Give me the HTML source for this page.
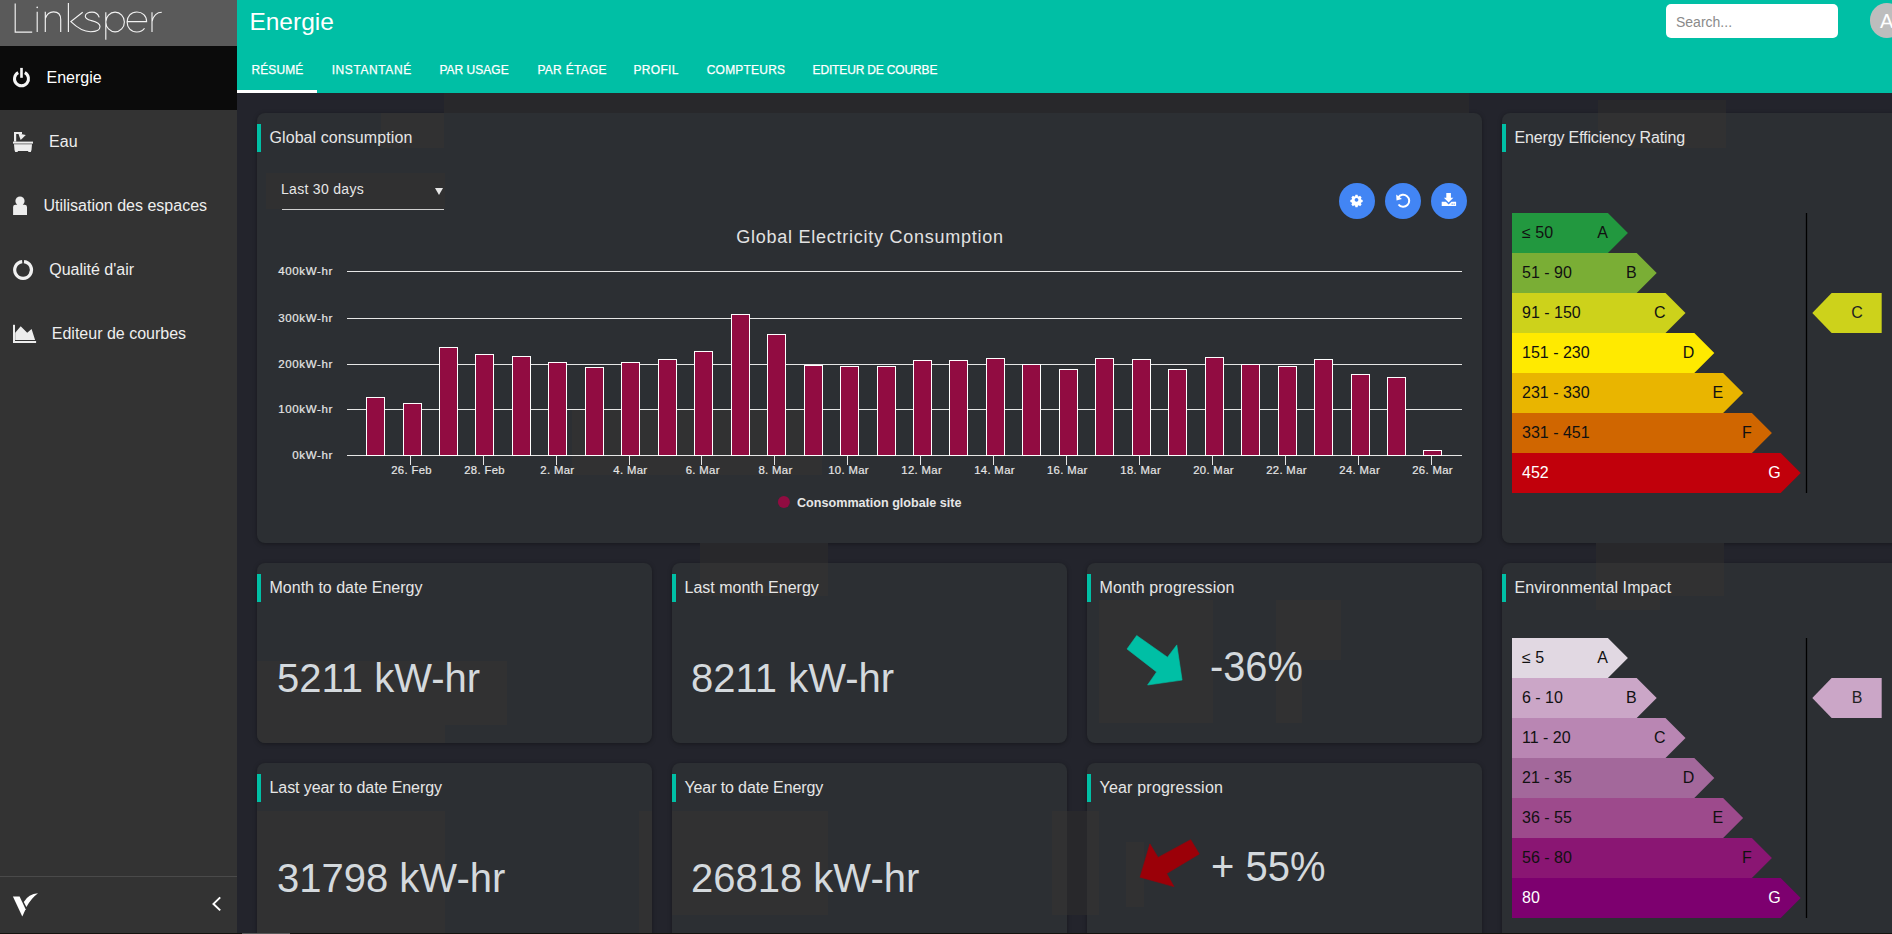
<!DOCTYPE html>
<html><head><meta charset="utf-8"><title>Energie</title>
<style>
html,body{margin:0;padding:0;}
body{width:1892px;height:934px;overflow:hidden;position:relative;background:#23242c;font-family:"Liberation Sans", sans-serif;}
.tab{position:absolute;top:63.54px;font-size:12px;line-height:12px;color:#fff;white-space:nowrap;-webkit-text-stroke:0.25px #fff;}
</style></head><body>
<div style="position:absolute;left:0;top:0;width:237px;height:934px;background:#333333"></div>
<div style="position:absolute;left:0;top:0;width:237px;height:46px;background:#5a5a5a"></div>
<div style="position:absolute;left:0;top:46px;width:237px;height:64px;background:#0b0b0b"></div>
<svg style="position:absolute;left:0;top:0" width="237" height="46" viewBox="0 0 237 46">
<g fill="none" stroke="#f2f2f2" stroke-width="1.15" stroke-linecap="butt">
<path d="M15.2,3.4 V32.1 H32.2"/>
<path d="M37.2,11.8 V32.1"/>
<path d="M45.3,11.8 V32.1 M45.3,18.5 C47,13.5 51,11.8 53.5,11.8 C58,11.8 60.7,14.5 60.7,19.5 V32.1"/>
<path d="M68.4,3 V32.1 M82.7,12.3 L70.9,21.6 C77,27.5 83,31.7 90.5,31.7 C96.5,31.7 100,29.5 100,26.5 C100,22.6 95,21.5 91,20.5 C87,19.5 85.3,18.3 85.3,16.3 C85.3,13.7 88.5,12.1 92,12.1 C95.5,12.1 98.2,13.8 99.2,17.3"/>
<path d="M105.8,12.3 V39.7 M105.8,22 A9.3,9.8 0 1 0 124.4,22 A9.3,9.8 0 1 0 105.8,22"/>
<path d="M127.1,21.6 H146.6 C146.6,15.8 142.5,12 136.8,12 C131,12 127.1,16.3 127.1,22 C127.1,27.7 131,32 136.8,32 C140.5,32 143.2,30.3 144.5,28.3"/>
<path d="M152,12.3 V32.1 M152,21.5 C153.5,15.5 157,12.3 161.8,12.3"/>
</g>
<circle cx="37.2" cy="7.4" r="0.8" fill="#f2f2f2"/>
</svg>
<svg style="position:absolute;left:0;top:46px" width="60" height="310" viewBox="0 46 60 310">
<g fill="none" stroke="#f5f5f5" stroke-width="3">
<path d="M18.21,72.62 A7,7 0 1 0 24.79,72.62"/>
</g>
<rect x="20.2" y="67.9" width="2.6" height="9.9" fill="#f5f5f5"/>
<g fill="#ededed">
<rect x="13" y="141.6" width="20" height="2"/>
<path d="M14,144.2 H32 L31.5,150 L30.8,152 H28.5 L28,151 H18 L17.5,152 H15.2 L14.5,150 Z"/>
<rect x="14" y="132" width="2.2" height="9.6"/>
<rect x="14" y="132" width="8" height="2"/>
<path d="M18.3,133.6 L25.8,135 L20.7,140 Z"/>
<circle cx="20" cy="201" r="4.6"/>
<path d="M13.1,207 Q13.1,204.7 15.5,204.7 H24.6 Q27,204.7 27,207 V215 H13.1 Z"/>
<path d="M15.2,332.7 L20.7,326.2 L27.2,332.7 L31.6,329 L35.1,339.9 H15.2 Z"/>
<rect x="13" y="324.8" width="2" height="18.2"/>
<rect x="13" y="341" width="23.1" height="2"/>
</g>
<path d="M22.2,261.55 A8.4,8.4 0 1 0 24.0,261.55" fill="none" stroke="#f0f0f0" stroke-width="3.2"/>
</svg>
<div style="position:absolute;left:46.5px;top:70.46px;font-size:16px;line-height:16px;color:#ffffff;font-weight:400;white-space:nowrap;">Energie</div>
<div style="position:absolute;left:49.099999999999994px;top:134.46px;font-size:16px;line-height:16px;color:#eeeeee;font-weight:400;white-space:nowrap;">Eau</div>
<div style="position:absolute;left:43.4px;top:198.46px;font-size:16px;line-height:16px;color:#eeeeee;font-weight:400;white-space:nowrap;">Utilisation des espaces</div>
<div style="position:absolute;left:49.199999999999996px;top:262.46px;font-size:16px;line-height:16px;color:#eeeeee;font-weight:400;white-space:nowrap;">Qualité d&#39;air</div>
<div style="position:absolute;left:51.800000000000004px;top:326.46px;font-size:16px;line-height:16px;color:#eeeeee;font-weight:400;white-space:nowrap;">Editeur de courbes</div>
<div style="position:absolute;left:0;top:876px;width:237px;height:1px;background:#4a4a4a"></div>
<svg style="position:absolute;left:0;top:880px" width="237" height="54" viewBox="0 880 237 54">
<path d="M12.9,896.6 L19.6,896.6 L25.6,909.3 L22.3,916.5 Z" fill="#fff"/>
<path d="M23.8,902 Q28.5,893.6 38,893.2 Q31.5,898 26.4,906.9 Z" fill="#fff"/>
<path d="M220.2,897.4 L213.5,903.9 L220.2,910.4" fill="none" stroke="#fff" stroke-width="2"/>
</svg>
<div style="position:absolute;left:237px;top:0;width:1655px;height:93px;background:#00bfa5"></div>
<div style="position:absolute;left:249.4px;top:10.06px;font-size:24.5px;line-height:24.5px;color:#ffffff;font-weight:400;white-space:nowrap;">Energie</div>
<div class="tab" style="left:251.5px;letter-spacing:0.1px">RÉSUMÉ</div>
<div class="tab" style="left:331.70000000000005px;letter-spacing:0.59px">INSTANTANÉ</div>
<div class="tab" style="left:439.5px;letter-spacing:0.0px">PAR USAGE</div>
<div class="tab" style="left:537.4px;letter-spacing:0.29px">PAR ÉTAGE</div>
<div class="tab" style="left:633.5px;letter-spacing:0.32px">PROFIL</div>
<div class="tab" style="left:706.7px;letter-spacing:0.22px">COMPTEURS</div>
<div class="tab" style="left:812.6px;letter-spacing:-0.16px">EDITEUR DE COURBE</div>
<div style="position:absolute;left:237px;top:90px;width:80px;height:3px;background:#fff"></div>
<div style="position:absolute;left:1666px;top:4px;width:172px;height:34px;background:#fff;border-radius:5px"></div>
<div style="position:absolute;left:1676px;top:15.15px;font-size:14px;line-height:14px;color:#8a8a8a;font-weight:400;white-space:nowrap;">Search...</div>
<div style="position:absolute;left:1870px;top:3.3px;width:34.4px;height:34.4px;border-radius:50%;background:#bdbdbd"></div>
<div style="position:absolute;left:1880px;top:10.87px;font-size:20px;line-height:20px;color:#ffffff;font-weight:400;white-space:nowrap;">A</div>
<div style="position:absolute;left:257px;top:113px;width:1225px;height:430px;background:#2c2f33;border-radius:8px;box-shadow:0 1px 4px rgba(0,0,0,0.35)"></div>
<div style="position:absolute;left:257px;top:124px;width:4px;height:28px;background:#00bfa5"></div>
<div style="position:absolute;left:1502px;top:113px;width:420px;height:430px;background:#2c2f33;border-radius:8px;box-shadow:0 1px 4px rgba(0,0,0,0.35)"></div>
<div style="position:absolute;left:1502px;top:124px;width:4px;height:28px;background:#00bfa5"></div>
<div style="position:absolute;left:257px;top:563px;width:395px;height:180px;background:#2c2f33;border-radius:8px;box-shadow:0 1px 4px rgba(0,0,0,0.35)"></div>
<div style="position:absolute;left:257px;top:574px;width:4px;height:28px;background:#00bfa5"></div>
<div style="position:absolute;left:672px;top:563px;width:395px;height:180px;background:#2c2f33;border-radius:8px;box-shadow:0 1px 4px rgba(0,0,0,0.35)"></div>
<div style="position:absolute;left:672px;top:574px;width:4px;height:28px;background:#00bfa5"></div>
<div style="position:absolute;left:1087px;top:563px;width:395px;height:180px;background:#2c2f33;border-radius:8px;box-shadow:0 1px 4px rgba(0,0,0,0.35)"></div>
<div style="position:absolute;left:1087px;top:574px;width:4px;height:28px;background:#00bfa5"></div>
<div style="position:absolute;left:1502px;top:563px;width:420px;height:400px;background:#2c2f33;border-radius:8px;box-shadow:0 1px 4px rgba(0,0,0,0.35)"></div>
<div style="position:absolute;left:1502px;top:574px;width:4px;height:28px;background:#00bfa5"></div>
<div style="position:absolute;left:257px;top:763px;width:395px;height:200px;background:#2c2f33;border-radius:8px;box-shadow:0 1px 4px rgba(0,0,0,0.35)"></div>
<div style="position:absolute;left:257px;top:774px;width:4px;height:28px;background:#00bfa5"></div>
<div style="position:absolute;left:672px;top:763px;width:395px;height:200px;background:#2c2f33;border-radius:8px;box-shadow:0 1px 4px rgba(0,0,0,0.35)"></div>
<div style="position:absolute;left:672px;top:774px;width:4px;height:28px;background:#00bfa5"></div>
<div style="position:absolute;left:1087px;top:763px;width:395px;height:200px;background:#2c2f33;border-radius:8px;box-shadow:0 1px 4px rgba(0,0,0,0.35)"></div>
<div style="position:absolute;left:1087px;top:774px;width:4px;height:28px;background:#00bfa5"></div>
<div style="position:absolute;left:444px;top:93px;width:1025px;height:20px;background:#28282b;"></div>
<div style="position:absolute;left:381px;top:113px;width:63px;height:35px;background:#313132;"></div>
<div style="position:absolute;left:1598px;top:100px;width:128px;height:13px;background:#28282b;"></div>
<div style="position:absolute;left:1598px;top:113px;width:128px;height:35px;background:#313132;"></div>
<div style="position:absolute;left:257px;top:661px;width:250px;height:64px;background:#313132;"></div>
<div style="position:absolute;left:257px;top:725px;width:188px;height:18px;background:#313132;border-bottom-left-radius:8px"></div>
<div style="position:absolute;left:1099px;top:600px;width:114px;height:123px;background:#313132;"></div>
<div style="position:absolute;left:1276px;top:600px;width:65px;height:60px;background:#313132;"></div>
<div style="position:absolute;left:1276px;top:660px;width:26px;height:63px;background:#313132;"></div>
<div style="position:absolute;left:700px;top:543px;width:128px;height:20px;background:#28282b;"></div>
<div style="position:absolute;left:700px;top:563px;width:128px;height:33px;background:#313132;"></div>
<div style="position:absolute;left:672px;top:811px;width:156px;height:104px;background:#313132;"></div>
<div style="position:absolute;left:1052px;top:811px;width:15px;height:104px;background:#313132;"></div>
<div style="position:absolute;left:1067px;top:811px;width:20px;height:104px;background:#28282b;"></div>
<div style="position:absolute;left:1087px;top:811px;width:12px;height:104px;background:#313132;"></div>
<div style="position:absolute;left:1126px;top:842px;width:18px;height:65px;background:#313132;"></div>
<div style="position:absolute;left:257px;top:811px;width:188px;height:123px;background:#313132;"></div>
<div style="position:absolute;left:639px;top:811px;width:13px;height:123px;background:#313132;"></div>
<div style="position:absolute;left:1596px;top:543px;width:128px;height:20px;background:#28282b;"></div>
<div style="position:absolute;left:1596px;top:563px;width:128px;height:33px;background:#313132;"></div>
<div style="position:absolute;left:1596px;top:596px;width:64px;height:14px;background:#313132;"></div>
<div style="position:absolute;left:572px;top:409px;width:250px;height:66px;background:#313132;"></div>
<div style="position:absolute;left:269.5px;top:129.56px;font-size:16px;line-height:16px;color:#e6e6e6;font-weight:400;white-space:nowrap;letter-spacing:0.08px">Global consumption</div>
<div style="position:absolute;left:1514.5px;top:129.56px;font-size:16px;line-height:16px;color:#e6e6e6;font-weight:400;white-space:nowrap;letter-spacing:-0.15px">Energy Efficiency Rating</div>
<div style="position:absolute;left:269.5px;top:579.96px;font-size:16px;line-height:16px;color:#e6e6e6;font-weight:400;white-space:nowrap;letter-spacing:0px">Month to date Energy</div>
<div style="position:absolute;left:684.5px;top:579.96px;font-size:16px;line-height:16px;color:#e6e6e6;font-weight:400;white-space:nowrap;letter-spacing:0px">Last month Energy</div>
<div style="position:absolute;left:1099.5px;top:579.96px;font-size:16px;line-height:16px;color:#e6e6e6;font-weight:400;white-space:nowrap;letter-spacing:0.15px">Month progression</div>
<div style="position:absolute;left:1514.5px;top:579.96px;font-size:16px;line-height:16px;color:#e6e6e6;font-weight:400;white-space:nowrap;letter-spacing:0.1px">Environmental Impact</div>
<div style="position:absolute;left:269.5px;top:779.96px;font-size:16px;line-height:16px;color:#e6e6e6;font-weight:400;white-space:nowrap;letter-spacing:-0.08px">Last year to date Energy</div>
<div style="position:absolute;left:684.5px;top:779.96px;font-size:16px;line-height:16px;color:#e6e6e6;font-weight:400;white-space:nowrap;letter-spacing:-0.12px">Year to date Energy</div>
<div style="position:absolute;left:1099.5px;top:779.96px;font-size:16px;line-height:16px;color:#e6e6e6;font-weight:400;white-space:nowrap;letter-spacing:0.2px">Year progression</div>
<div style="position:absolute;left:277px;top:658.34px;font-size:40px;line-height:40px;color:#d4d9dd;font-weight:400;white-space:nowrap;">5211 kW-hr</div>
<div style="position:absolute;left:691px;top:658.34px;font-size:40px;line-height:40px;color:#d4d9dd;font-weight:400;white-space:nowrap;">8211 kW-hr</div>
<div style="position:absolute;left:277px;top:858.44px;font-size:40px;line-height:40px;color:#d4d9dd;font-weight:400;white-space:nowrap;">31798 kW-hr</div>
<div style="position:absolute;left:691px;top:858.44px;font-size:40px;line-height:40px;color:#d4d9dd;font-weight:400;white-space:nowrap;">26818 kW-hr</div>
<div style="position:absolute;left:1210.3px;top:644.60px;font-size:43px;line-height:43px;color:#d4d9dd;font-weight:400;white-space:nowrap;transform:scaleX(0.925);transform-origin:0 0">-36%</div>
<div style="position:absolute;left:1210.6px;top:844.60px;font-size:43px;line-height:43px;color:#d4d9dd;font-weight:400;white-space:nowrap;transform:scaleX(0.93);transform-origin:0 0">+ 55%</div>
<svg style="position:absolute;left:1100px;top:620px" width="120" height="280" viewBox="1100 620 120 280">
<path d="M1136.7,635.5 L1167.5,657.2 L1176.8,644.9 L1182.1,680.1 L1147.6,685 L1156.6,671.9 L1127,649 Z" fill="#00bfa5" stroke="#00bfa5" stroke-width="0.6" stroke-linejoin="round"/>
<path d="M1190.7,839.7 L1199.3,854 L1166.7,873.5 L1173.9,886.6 L1140.1,877.2 L1149.9,843.9 L1158.1,857.4 Z" fill="#9b0008" stroke="#9b0008" stroke-width="0.6" stroke-linejoin="round"/>
</svg>
<div style="position:absolute;left:266px;top:173px;width:179px;height:36px;background:#303031"></div>
<div style="position:absolute;left:281px;top:182.15px;font-size:14px;line-height:14px;color:#e6e6e6;font-weight:400;white-space:nowrap;letter-spacing:0.3px">Last 30 days</div>
<div style="position:absolute;left:435px;top:187.7px;width:0;height:0;border-left:4px solid transparent;border-right:4px solid transparent;border-top:7.5px solid #e6e6e6"></div>
<div style="position:absolute;left:282px;top:209px;width:162px;height:1px;background:#cfcfcf"></div>
<div style="position:absolute;left:1339px;top:183px;width:36px;height:36px;border-radius:50%;background:#4285f4"></div>
<div style="position:absolute;left:1385px;top:183px;width:36px;height:36px;border-radius:50%;background:#4285f4"></div>
<div style="position:absolute;left:1431px;top:183px;width:36px;height:36px;border-radius:50%;background:#4285f4"></div>
<svg style="position:absolute;left:1330px;top:180px" width="140" height="42" viewBox="1330 180 140 42">
<g fill="#fff">
<g transform="translate(1356.5,199.9) scale(0.78) translate(-1357,-201)"><path d="M1355.6,194.5h2.8l0.4,1.8 1.2,0.5 1.6-1 2,2-1,1.6 0.5,1.2 1.8,0.4v2.8l-1.8,0.4-0.5,1.2 1,1.6-2,2-1.6-1-1.2,0.5-0.4,1.8h-2.8l-0.4-1.8-1.2-0.5-1.6,1-2-2 1-1.6-0.5-1.2-1.8-0.4v-2.8l1.8-0.4 0.5-1.2-1-1.6 2-2 1.6,1 1.2-0.5z M1357,198.6a2.4,2.4 0 1 0 0.01,0z" fill-rule="evenodd"/></g>
</g>
<path d="M1398.2,197.5 A6,6 0 1 1 1398.5,204.5" fill="none" stroke="#fff" stroke-width="2"/>
<path d="M1396.2,194.5 L1396.5,200.5 L1402,199 Z" fill="#fff"/>
<g fill="#fff">
<rect x="1446.3" y="193" width="4.6" height="5.5"/>
<path d="M1443.9,197.8 H1453.4 L1448.65,202.6 Z"/>
<path d="M1441.7,201.8 H1445.9 L1448.65,204.5 L1451.4,201.8 H1456.1 V206 H1441.7 Z"/>
</g>
<rect x="1451.6" y="203.6" width="1.1" height="1.1" fill="#4285f4"/>
<rect x="1453.6" y="203.6" width="1.1" height="1.1" fill="#4285f4"/>
</svg>
<svg style="position:absolute;left:0;top:0" width="1892" height="560" viewBox="0 0 1892 560">
<text x="870" y="243" text-anchor="middle" font-family="Liberation Sans" font-size="18" letter-spacing="0.75" fill="#e2e2e2">Global Electricity Consumption</text>
<path d="M347,455.5 H1462" stroke="#e6e6e6" stroke-width="1"/>
<text x="333" y="459" text-anchor="end" font-family="Liberation Sans" font-size="11.5" letter-spacing="0.65" fill="#e6e6e6" stroke="#e6e6e6" stroke-width="0.2">0kW-hr</text>
<path d="M347,409.5 H1462" stroke="#e6e6e6" stroke-width="1"/>
<text x="333" y="413" text-anchor="end" font-family="Liberation Sans" font-size="11.5" letter-spacing="0.65" fill="#e6e6e6" stroke="#e6e6e6" stroke-width="0.2">100kW-hr</text>
<path d="M347,364.5 H1462" stroke="#e6e6e6" stroke-width="1"/>
<text x="333" y="368" text-anchor="end" font-family="Liberation Sans" font-size="11.5" letter-spacing="0.65" fill="#e6e6e6" stroke="#e6e6e6" stroke-width="0.2">200kW-hr</text>
<path d="M347,318.5 H1462" stroke="#e6e6e6" stroke-width="1"/>
<text x="333" y="322" text-anchor="end" font-family="Liberation Sans" font-size="11.5" letter-spacing="0.65" fill="#e6e6e6" stroke="#e6e6e6" stroke-width="0.2">300kW-hr</text>
<path d="M347,271.5 H1462" stroke="#e6e6e6" stroke-width="1"/>
<text x="333" y="275" text-anchor="end" font-family="Liberation Sans" font-size="11.5" letter-spacing="0.65" fill="#e6e6e6" stroke="#e6e6e6" stroke-width="0.2">400kW-hr</text>
<rect x="366.5" y="397.5" width="18" height="58.0" fill="#910c41" stroke="#fff" stroke-width="1"/>
<rect x="403.5" y="403.5" width="18" height="52.0" fill="#910c41" stroke="#fff" stroke-width="1"/>
<rect x="439.5" y="347.5" width="18" height="108.0" fill="#910c41" stroke="#fff" stroke-width="1"/>
<rect x="475.5" y="354.5" width="18" height="101.0" fill="#910c41" stroke="#fff" stroke-width="1"/>
<rect x="512.5" y="356.5" width="18" height="99.0" fill="#910c41" stroke="#fff" stroke-width="1"/>
<rect x="548.5" y="362.5" width="18" height="93.0" fill="#910c41" stroke="#fff" stroke-width="1"/>
<rect x="585.5" y="367.5" width="18" height="88.0" fill="#910c41" stroke="#fff" stroke-width="1"/>
<rect x="621.5" y="362.5" width="18" height="93.0" fill="#910c41" stroke="#fff" stroke-width="1"/>
<rect x="658.5" y="359.5" width="18" height="96.0" fill="#910c41" stroke="#fff" stroke-width="1"/>
<rect x="694.5" y="351.5" width="18" height="104.0" fill="#910c41" stroke="#fff" stroke-width="1"/>
<rect x="731.5" y="314.5" width="18" height="141.0" fill="#910c41" stroke="#fff" stroke-width="1"/>
<rect x="767.5" y="334.5" width="18" height="121.0" fill="#910c41" stroke="#fff" stroke-width="1"/>
<rect x="804.5" y="365.5" width="18" height="90.0" fill="#910c41" stroke="#fff" stroke-width="1"/>
<rect x="840.5" y="366.5" width="18" height="89.0" fill="#910c41" stroke="#fff" stroke-width="1"/>
<rect x="877.5" y="366.5" width="18" height="89.0" fill="#910c41" stroke="#fff" stroke-width="1"/>
<rect x="913.5" y="360.5" width="18" height="95.0" fill="#910c41" stroke="#fff" stroke-width="1"/>
<rect x="949.5" y="360.5" width="18" height="95.0" fill="#910c41" stroke="#fff" stroke-width="1"/>
<rect x="986.5" y="358.5" width="18" height="97.0" fill="#910c41" stroke="#fff" stroke-width="1"/>
<rect x="1022.5" y="364.5" width="18" height="91.0" fill="#910c41" stroke="#fff" stroke-width="1"/>
<rect x="1059.5" y="369.5" width="18" height="86.0" fill="#910c41" stroke="#fff" stroke-width="1"/>
<rect x="1095.5" y="358.5" width="18" height="97.0" fill="#910c41" stroke="#fff" stroke-width="1"/>
<rect x="1132.5" y="359.5" width="18" height="96.0" fill="#910c41" stroke="#fff" stroke-width="1"/>
<rect x="1168.5" y="369.5" width="18" height="86.0" fill="#910c41" stroke="#fff" stroke-width="1"/>
<rect x="1205.5" y="357.5" width="18" height="98.0" fill="#910c41" stroke="#fff" stroke-width="1"/>
<rect x="1241.5" y="364.5" width="18" height="91.0" fill="#910c41" stroke="#fff" stroke-width="1"/>
<rect x="1278.5" y="366.5" width="18" height="89.0" fill="#910c41" stroke="#fff" stroke-width="1"/>
<rect x="1314.5" y="359.5" width="18" height="96.0" fill="#910c41" stroke="#fff" stroke-width="1"/>
<rect x="1351.5" y="374.5" width="18" height="81.0" fill="#910c41" stroke="#fff" stroke-width="1"/>
<rect x="1387.5" y="377.5" width="18" height="78.0" fill="#910c41" stroke="#fff" stroke-width="1"/>
<rect x="1423.5" y="450.5" width="18" height="5.0" fill="#910c41" stroke="#fff" stroke-width="1"/>
<path d="M410.5,455.5 V465" stroke="#e6e6e6" stroke-width="1"/>
<text x="411.59999999999997" y="474" text-anchor="middle" font-family="Liberation Sans" font-size="11.3" letter-spacing="0.35" fill="#e6e6e6" stroke="#e6e6e6" stroke-width="0.2">26. Feb</text>
<path d="M483.5,455.5 V465" stroke="#e6e6e6" stroke-width="1"/>
<text x="484.59999999999997" y="474" text-anchor="middle" font-family="Liberation Sans" font-size="11.3" letter-spacing="0.35" fill="#e6e6e6" stroke="#e6e6e6" stroke-width="0.2">28. Feb</text>
<path d="M556.5,455.5 V465" stroke="#e6e6e6" stroke-width="1"/>
<text x="557.4000000000001" y="474" text-anchor="middle" font-family="Liberation Sans" font-size="11.3" letter-spacing="0.35" fill="#e6e6e6" stroke="#e6e6e6" stroke-width="0.2">2. Mar</text>
<path d="M629.5,455.5 V465" stroke="#e6e6e6" stroke-width="1"/>
<text x="630.4000000000001" y="474" text-anchor="middle" font-family="Liberation Sans" font-size="11.3" letter-spacing="0.35" fill="#e6e6e6" stroke="#e6e6e6" stroke-width="0.2">4. Mar</text>
<path d="M701.5,455.5 V465" stroke="#e6e6e6" stroke-width="1"/>
<text x="702.7" y="474" text-anchor="middle" font-family="Liberation Sans" font-size="11.3" letter-spacing="0.35" fill="#e6e6e6" stroke="#e6e6e6" stroke-width="0.2">6. Mar</text>
<path d="M774.5,455.5 V465" stroke="#e6e6e6" stroke-width="1"/>
<text x="775.5" y="474" text-anchor="middle" font-family="Liberation Sans" font-size="11.3" letter-spacing="0.35" fill="#e6e6e6" stroke="#e6e6e6" stroke-width="0.2">8. Mar</text>
<path d="M847.5,455.5 V465" stroke="#e6e6e6" stroke-width="1"/>
<text x="848.6" y="474" text-anchor="middle" font-family="Liberation Sans" font-size="11.3" letter-spacing="0.35" fill="#e6e6e6" stroke="#e6e6e6" stroke-width="0.2">10. Mar</text>
<path d="M920.5,455.5 V465" stroke="#e6e6e6" stroke-width="1"/>
<text x="921.7" y="474" text-anchor="middle" font-family="Liberation Sans" font-size="11.3" letter-spacing="0.35" fill="#e6e6e6" stroke="#e6e6e6" stroke-width="0.2">12. Mar</text>
<path d="M993.5,455.5 V465" stroke="#e6e6e6" stroke-width="1"/>
<text x="994.5" y="474" text-anchor="middle" font-family="Liberation Sans" font-size="11.3" letter-spacing="0.35" fill="#e6e6e6" stroke="#e6e6e6" stroke-width="0.2">14. Mar</text>
<path d="M1066.5,455.5 V465" stroke="#e6e6e6" stroke-width="1"/>
<text x="1067.3" y="474" text-anchor="middle" font-family="Liberation Sans" font-size="11.3" letter-spacing="0.35" fill="#e6e6e6" stroke="#e6e6e6" stroke-width="0.2">16. Mar</text>
<path d="M1139.5,455.5 V465" stroke="#e6e6e6" stroke-width="1"/>
<text x="1140.7" y="474" text-anchor="middle" font-family="Liberation Sans" font-size="11.3" letter-spacing="0.35" fill="#e6e6e6" stroke="#e6e6e6" stroke-width="0.2">18. Mar</text>
<path d="M1212.5,455.5 V465" stroke="#e6e6e6" stroke-width="1"/>
<text x="1213.5" y="474" text-anchor="middle" font-family="Liberation Sans" font-size="11.3" letter-spacing="0.35" fill="#e6e6e6" stroke="#e6e6e6" stroke-width="0.2">20. Mar</text>
<path d="M1285.5,455.5 V465" stroke="#e6e6e6" stroke-width="1"/>
<text x="1286.5" y="474" text-anchor="middle" font-family="Liberation Sans" font-size="11.3" letter-spacing="0.35" fill="#e6e6e6" stroke="#e6e6e6" stroke-width="0.2">22. Mar</text>
<path d="M1358.5,455.5 V465" stroke="#e6e6e6" stroke-width="1"/>
<text x="1359.7" y="474" text-anchor="middle" font-family="Liberation Sans" font-size="11.3" letter-spacing="0.35" fill="#e6e6e6" stroke="#e6e6e6" stroke-width="0.2">24. Mar</text>
<path d="M1431.5,455.5 V465" stroke="#e6e6e6" stroke-width="1"/>
<text x="1432.6000000000001" y="474" text-anchor="middle" font-family="Liberation Sans" font-size="11.3" letter-spacing="0.35" fill="#e6e6e6" stroke="#e6e6e6" stroke-width="0.2">26. Mar</text>
<circle cx="783.9" cy="502" r="6" fill="#910c41"/>
<text x="797" y="507" font-family="Liberation Sans" font-size="12.6" font-weight="bold" fill="#e6e6e6">Consommation globale site</text>
</svg>
<svg style="position:absolute;left:1500px;top:208px" width="392" height="290" viewBox="1500 208 392 290">
<path d="M1512,213 H1607.9 L1627.9,233 L1607.9,253 H1512 Z" fill="#22983f"/>
<text x="1522" y="237.8" font-family="Liberation Sans" font-size="16" fill="#111111">≤ 50</text>
<text x="1607.9" y="237.8" text-anchor="end" font-family="Liberation Sans" font-size="16" fill="#111111">A</text>
<path d="M1512,253 H1636.7 L1656.7,273 L1636.7,293 H1512 Z" fill="#7aae35"/>
<text x="1522" y="277.8" font-family="Liberation Sans" font-size="16" fill="#111111">51 - 90</text>
<text x="1636.7" y="277.8" text-anchor="end" font-family="Liberation Sans" font-size="16" fill="#111111">B</text>
<path d="M1512,293 H1665.5 L1685.5,313 L1665.5,333 H1512 Z" fill="#cdd21b"/>
<text x="1522" y="317.8" font-family="Liberation Sans" font-size="16" fill="#111111">91 - 150</text>
<text x="1665.5" y="317.8" text-anchor="end" font-family="Liberation Sans" font-size="16" fill="#111111">C</text>
<path d="M1512,333 H1694.3 L1714.3,353 L1694.3,373 H1512 Z" fill="#ffea00"/>
<text x="1522" y="357.8" font-family="Liberation Sans" font-size="16" fill="#111111">151 - 230</text>
<text x="1694.3" y="357.8" text-anchor="end" font-family="Liberation Sans" font-size="16" fill="#111111">D</text>
<path d="M1512,373 H1723.1 L1743.1,393 L1723.1,413 H1512 Z" fill="#e9b500"/>
<text x="1522" y="397.8" font-family="Liberation Sans" font-size="16" fill="#111111">231 - 330</text>
<text x="1723.1" y="397.8" text-anchor="end" font-family="Liberation Sans" font-size="16" fill="#111111">E</text>
<path d="M1512,413 H1751.9 L1771.9,433 L1751.9,453 H1512 Z" fill="#d06600"/>
<text x="1522" y="437.8" font-family="Liberation Sans" font-size="16" fill="#111111">331 - 451</text>
<text x="1751.9" y="437.8" text-anchor="end" font-family="Liberation Sans" font-size="16" fill="#111111">F</text>
<path d="M1512,453 H1780.7 L1800.7,473 L1780.7,493 H1512 Z" fill="#c1000b"/>
<text x="1522" y="477.8" font-family="Liberation Sans" font-size="16" fill="#ffffff">452</text>
<text x="1780.7" y="477.8" text-anchor="end" font-family="Liberation Sans" font-size="16" fill="#ffffff">G</text>
<path d="M1806.5,213 V493" stroke="#000" stroke-width="1.3"/>
<path d="M1812.3,313 L1831.6,293 H1881.7 V333 H1831.6 Z" fill="#cdd21b"/>
<text x="1857" y="317.8" text-anchor="middle" font-family="Liberation Sans" font-size="16" fill="#222">C</text>
</svg>
<svg style="position:absolute;left:1500px;top:633px" width="392" height="290" viewBox="1500 633 392 290">
<path d="M1512,638 H1607.9 L1627.9,658 L1607.9,678 H1512 Z" fill="#e1d8e2"/>
<text x="1522" y="662.8" font-family="Liberation Sans" font-size="16" fill="#111111">≤ 5</text>
<text x="1607.9" y="662.8" text-anchor="end" font-family="Liberation Sans" font-size="16" fill="#111111">A</text>
<path d="M1512,678 H1636.7 L1656.7,698 L1636.7,718 H1512 Z" fill="#cba6c7"/>
<text x="1522" y="702.8" font-family="Liberation Sans" font-size="16" fill="#111111">6 - 10</text>
<text x="1636.7" y="702.8" text-anchor="end" font-family="Liberation Sans" font-size="16" fill="#111111">B</text>
<path d="M1512,718 H1665.5 L1685.5,738 L1665.5,758 H1512 Z" fill="#b986b3"/>
<text x="1522" y="742.8" font-family="Liberation Sans" font-size="16" fill="#111111">11 - 20</text>
<text x="1665.5" y="742.8" text-anchor="end" font-family="Liberation Sans" font-size="16" fill="#111111">C</text>
<path d="M1512,758 H1694.3 L1714.3,778 L1694.3,798 H1512 Z" fill="#a3689b"/>
<text x="1522" y="782.8" font-family="Liberation Sans" font-size="16" fill="#111111">21 - 35</text>
<text x="1694.3" y="782.8" text-anchor="end" font-family="Liberation Sans" font-size="16" fill="#111111">D</text>
<path d="M1512,798 H1723.1 L1743.1,818 L1723.1,838 H1512 Z" fill="#9d4a8c"/>
<text x="1522" y="822.8" font-family="Liberation Sans" font-size="16" fill="#111111">36 - 55</text>
<text x="1723.1" y="822.8" text-anchor="end" font-family="Liberation Sans" font-size="16" fill="#111111">E</text>
<path d="M1512,838 H1751.9 L1771.9,858 L1751.9,878 H1512 Z" fill="#8a1673"/>
<text x="1522" y="862.8" font-family="Liberation Sans" font-size="16" fill="#111111">56 - 80</text>
<text x="1751.9" y="862.8" text-anchor="end" font-family="Liberation Sans" font-size="16" fill="#111111">F</text>
<path d="M1512,878 H1780.7 L1800.7,898 L1780.7,918 H1512 Z" fill="#7d006f"/>
<text x="1522" y="902.8" font-family="Liberation Sans" font-size="16" fill="#ffffff">80</text>
<text x="1780.7" y="902.8" text-anchor="end" font-family="Liberation Sans" font-size="16" fill="#ffffff">G</text>
<path d="M1806.5,638 V918" stroke="#000" stroke-width="1.3"/>
<path d="M1812.3,698 L1831.6,678 H1881.7 V718 H1831.6 Z" fill="#cba6c7"/>
<text x="1857" y="702.8" text-anchor="middle" font-family="Liberation Sans" font-size="16" fill="#222">B</text>
</svg>
<div style="position:absolute;left:0;top:933px;width:1892px;height:1px;background:#15130f"></div>
<div style="position:absolute;left:242px;top:933px;width:48px;height:1px;background:#5a5a5a"></div>
</body></html>
